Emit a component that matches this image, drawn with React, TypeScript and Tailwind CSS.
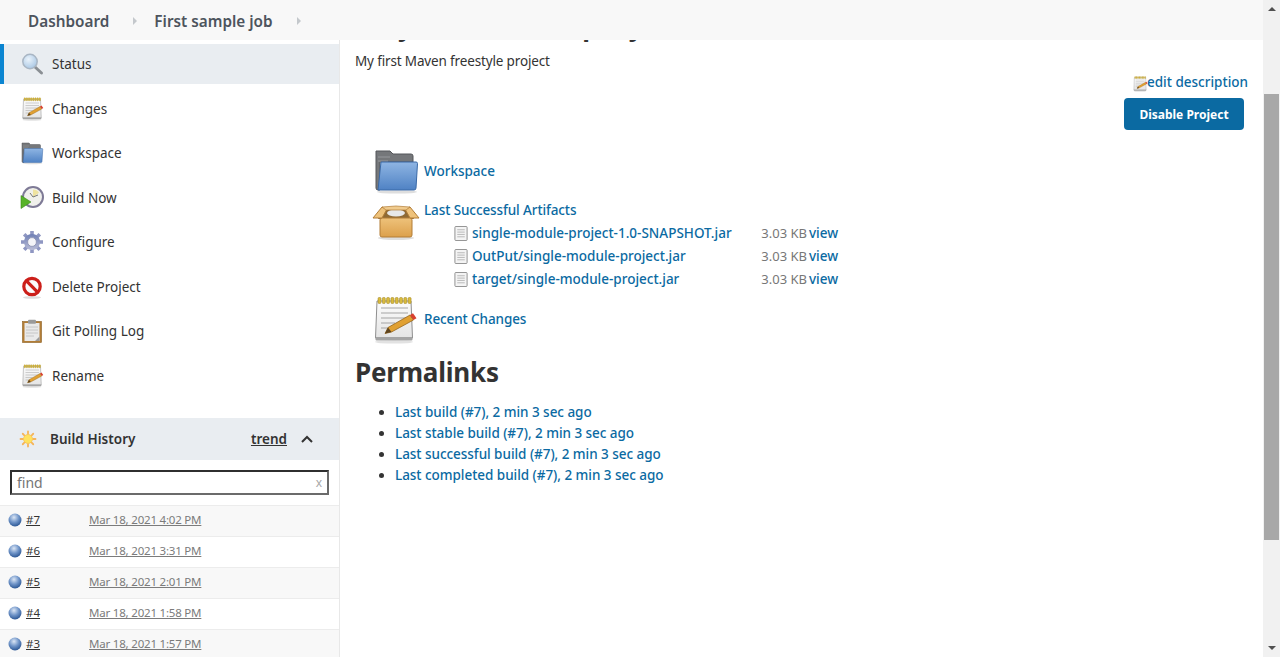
import type { ReactNode } from "react";

const font = "font-['Noto_Sans','Open_Sans',sans-serif]";

function Magnifier() {
  return (
    <svg viewBox="0 0 24 24" className="h-6 w-6 shrink-0">
      <defs>
        <radialGradient id="lens" cx="0.4" cy="0.35" r="0.8">
          <stop offset="0" stopColor="#eaf3fb" />
          <stop offset="1" stopColor="#9dbfe0" />
        </radialGradient>
      </defs>
      <path d="M15 15l6.5 6" stroke="#8a8f94" strokeWidth="3" strokeLinecap="round" />
      <circle cx="10" cy="9.5" r="7.2" fill="url(#lens)" stroke="#a9b6c4" strokeWidth="1.5" />
    </svg>
  );
}

// Notepad with pencil, also used at 48px and for the small edit icon
function Notepad({ size = "h-6 w-6" }: { size?: string }) {
  return (
    <svg viewBox="0 0 48 48" className={`${size} shrink-0`}>
      <defs>
        <linearGradient id="pad" x1="0" y1="0" x2="0" y2="1">
          <stop offset="0" stopColor="#fcfcfc" />
          <stop offset="1" stopColor="#e4e4e4" />
        </linearGradient>
      </defs>
      <ellipse cx="24" cy="46" rx="19" ry="1.6" fill="#e2e2e2" />
      <path d="M7 5h34l1.5 37h-37z" fill="url(#pad)" stroke="#8f8f8f" />
      <rect x="5.5" y="41" width="37" height="3.5" rx="1" fill="#a4a4a4" />
      <g fill="#d9bb3d" stroke="#9a7f1c" strokeWidth="0.5">
        <rect x="8" y="1.5" width="3" height="6" rx="1" />
        <rect x="12.3" y="1.5" width="3" height="6" rx="1" />
        <rect x="16.6" y="1.5" width="3" height="6" rx="1" />
        <rect x="20.9" y="1.5" width="3" height="6" rx="1" />
        <rect x="25.2" y="1.5" width="3" height="6" rx="1" />
        <rect x="29.5" y="1.5" width="3" height="6" rx="1" />
        <rect x="33.8" y="1.5" width="3" height="6" rx="1" />
        <rect x="38.1" y="1.5" width="3" height="6" rx="1" />
      </g>
      <path d="M11 12h27M11 17h27M11 22h27M11 27h14M11 32h8" stroke="#9b9b9b" strokeWidth="0.9" />
      <path d="M15 37.5l3-6 22-12.5 3.5 5-22 12z" fill="#e0a032" stroke="#8a5a12" strokeWidth="0.7" />
      <path d="M15 37.5l3-6 3.5 4.5z" fill="#5c4320" />
      <path d="M40 19l3-1.8 3.5 5-3 1.8z" fill="#d8402f" />
    </svg>
  );
}

function Folder({ size = "h-6 w-6" }: { size?: string }) {
  return (
    <svg viewBox="0 0 48 48" className={`${size} shrink-0`}>
      <defs>
        <linearGradient id="folderFront" x1="0" y1="0" x2="0" y2="1">
          <stop offset="0" stopColor="#8fb5e3" />
          <stop offset="1" stopColor="#4f82c4" />
        </linearGradient>
      </defs>
      <ellipse cx="25" cy="45" rx="20" ry="1.6" fill="#dedede" />
      <path d="M4 4h14l3 3h18a2 2 0 0 1 2 2v6H8v28H6a2 2 0 0 1-2-2z" fill="#75777a" stroke="#55575a" />
      <path d="M6 10h12M6 14h10" stroke="#97999c" />
      <path d="M6 43l3-28h35a1.5 1.5 0 0 1 1.5 1.5l-1.5 24.500a2 2 0 0 1-2 2z" fill="url(#folderFront)" stroke="#3a69a6" />
    </svg>
  );
}

function ClockPlay() {
  return (
    <svg viewBox="0 0 24 24" className="h-6 w-6 shrink-0">
      <circle cx="13" cy="11" r="10" fill="#f0f0ec" stroke="#7e7a96" strokeWidth="2" />
      <path d="M13 11V3.5a7.5 7.5 0 0 1 6 3.2z" fill="#efe3a0" />
      <path d="M13 11l-3-4M13 11l5-2" stroke="#777" strokeWidth="1" />
      <path d="M1 9.5l10 6.5-10 6.5z" fill="#58b32a" stroke="#3d8a1a" strokeWidth="0.6" />
    </svg>
  );
}

function Gear() {
  return (
    <svg viewBox="0 0 24 24" className="h-6 w-6 shrink-0">
      <defs>
        <linearGradient id="gearFill" x1="0" y1="0" x2="0" y2="1">
          <stop offset="0" stopColor="#6f7fb5" />
          <stop offset="1" stopColor="#b9bcd6" />
        </linearGradient>
      </defs>
      <g stroke="#8f97c2" strokeWidth="3.6">
        <path d="M12 1v22M1 12h22M4.2 4.2l15.6 15.6M19.8 4.2L4.2 19.8" />
      </g>
      <circle cx="12" cy="12" r="8" fill="url(#gearFill)" />
      <circle cx="12" cy="12" r="4.4" fill="#f4f4f8" stroke="#8a8fb0" strokeWidth="0.8" />
    </svg>
  );
}

function NoEntry() {
  return (
    <svg viewBox="0 0 24 24" className="h-6 w-6 shrink-0">
      <ellipse cx="12" cy="22.5" rx="9" ry="1.3" fill="#ddd" />
      <circle cx="12" cy="11.5" r="8.2" fill="#fbfbfb" stroke="#cc1f1a" strokeWidth="3.2" />
      <path d="M6.2 5.7l11.6 11.6" stroke="#cc1f1a" strokeWidth="3.2" />
    </svg>
  );
}

function Clipboard() {
  return (
    <svg viewBox="0 0 24 24" className="h-6 w-6 shrink-0">
      <rect x="2.5" y="2.5" width="19" height="21" fill="#b27d36" stroke="#8d6024" strokeWidth="0.6" />
      <rect x="4.5" y="4" width="15" height="18" fill="#e9e9e9" />
      <rect x="8" y="0.8" width="8" height="4" rx="1" fill="#9a9a9a" />
      <path d="M6 8h12M6 11h12M6 14h12M6 17h8" stroke="#bdbdbd" strokeWidth="0.8" />
      <path d="M15 22l4.5-4.5V22z" fill="#9b9b9b" />
    </svg>
  );
}

function Sun() {
  return (
    <svg viewBox="0 0 24 24" className="h-[18px] w-[18px] shrink-0">
      <g stroke="#f5b45a" strokeWidth="2.4" strokeLinecap="round">
        <path d="M12 2v3M12 19v3M2 12h3M19 12h3M5 5l2.1 2.1M16.9 16.9l2.1 2.1M5 19l2.1-2.1M16.9 7.1l2.1-2.1" />
      </g>
      <circle cx="12" cy="12" r="6" fill="#ffe25f" stroke="#f6b73c" strokeWidth="0.8" />
    </svg>
  );
}

function Ball() {
  return (
    <svg viewBox="0 0 16 16" className="h-[14px] w-[14px] shrink-0">
      <defs>
        <radialGradient id="ball" cx="0.42" cy="0.3" r="0.75">
          <stop offset="0" stopColor="#dbe6f5" />
          <stop offset="0.5" stopColor="#6f94c8" />
          <stop offset="1" stopColor="#234f8e" />
        </radialGradient>
      </defs>
      <circle cx="8" cy="8" r="7.4" fill="url(#ball)" />
    </svg>
  );
}

function Box() {
  return (
    <svg viewBox="0 0 48 48" className="mt-[7px] h-12 w-12 shrink-0">
      <defs>
        <linearGradient id="boxFill" x1="0" y1="0" x2="0" y2="1">
          <stop offset="0" stopColor="#eec27b" />
          <stop offset="1" stopColor="#dca04b" />
        </linearGradient>
      </defs>
      <ellipse cx="24" cy="33" rx="18" ry="2" fill="#dedede" />
      <path d="M10 3h28l4 11H6z" fill="#8f6a35" />
      <ellipse cx="24" cy="8" rx="9" ry="3.5" fill="#e8e8e8" />
      <rect x="8" y="13" width="32" height="19" rx="2" fill="url(#boxFill)" stroke="#b27d36" />
      <path d="M10 2L1 13h9l5-9zM38 2l9 11h-9l-5-9z" fill="#eec27b" stroke="#b27d36" />
      <path d="M10 2l14-1 14 1-4 3H14z" fill="#f0cb8e" stroke="#b27d36" strokeWidth="0.7" />
    </svg>
  );
}

function Doc() {
  return (
    <svg viewBox="0 0 14 16" className="h-[15px] w-[14px] shrink-0">
      <rect x="0.5" y="0.5" width="13" height="15" rx="1" fill="#f4f4f4" stroke="#8c8c8c" />
      <path d="M3 4h8M3 6.5h8M3 9h8M3 11.5h8" stroke="#b5b5b5" />
    </svg>
  );
}

const tasks: { label: string; icon: ReactNode }[] = [
  { label: "Status", icon: <Magnifier /> },
  { label: "Changes", icon: <Notepad /> },
  { label: "Workspace", icon: <Folder /> },
  { label: "Build Now", icon: <ClockPlay /> },
  { label: "Configure", icon: <Gear /> },
  { label: "Delete Project", icon: <NoEntry /> },
  { label: "Git Polling Log", icon: <Clipboard /> },
  { label: "Rename", icon: <Notepad /> },
];

const builds = [
  ["#7", "Mar 18, 2021 4:02 PM"],
  ["#6", "Mar 18, 2021 3:31 PM"],
  ["#5", "Mar 18, 2021 2:01 PM"],
  ["#4", "Mar 18, 2021 1:58 PM"],
  ["#3", "Mar 18, 2021 1:57 PM"],
];

const artifacts = [
  "single-module-project-1.0-SNAPSHOT.jar",
  "OutPut/single-module-project.jar",
  "target/single-module-project.jar",
];

const permalinks = [
  "Last build (#7), 2 min 3 sec ago",
  "Last stable build (#7), 2 min 3 sec ago",
  "Last successful build (#7), 2 min 3 sec ago",
  "Last completed build (#7), 2 min 3 sec ago",
];

function Crumb({ label }: { label: string }) {
  return (
    <div className="flex items-center">
      <span className="text-[15.3px] font-semibold text-[#4d545d]">{label}</span>
      <span className="ml-[24px] h-0 w-0 border-y-[4px] border-l-[4px] border-y-transparent border-l-[#c4c8cc]" />
    </div>
  );
}

function Sidebar() {
  return (
    <aside className="flex w-[340px] shrink-0 flex-col overflow-hidden border-r border-[#e8e8e8]">
      <nav className="flex flex-col pt-1">
        {tasks.map((t, i) => (
          <div
            key={t.label}
            className={`mb-[4.5px] flex h-10 items-center gap-2 border-l-4 pl-4 text-[13.5px] text-[#333] ${
              i === 0 ? "border-[#0b85d1] bg-[#e9edf1]" : "border-transparent"
            }`}
          >
            {t.icon}
            <span className="pt-[0.5px]">{t.label}</span>
          </div>
        ))}
      </nav>
      <div className="mt-[18px] flex h-[42px] shrink-0 items-center bg-[#e9edf1] pl-[19px] pr-[26px] text-[13.5px] text-[#333]">
        <Sun />
        <span className="ml-[13px] font-semibold tracking-[0.05px]">Build History</span>
        <a className="ml-auto font-semibold underline">trend</a>
        <svg viewBox="0 0 12 8" className="ml-[14px] h-2 w-3" fill="none" stroke="#333" strokeWidth="2">
          <path d="M1 7l5-5 5 5" />
        </svg>
      </div>
      <div className="shrink-0 p-[10px]">
        <div className="flex h-[25px] items-center border-2 border-[#2f2f2f] border-b-[#6b6b6b] border-r-[#6b6b6b] px-[5px] text-sm text-[#757575]">
          <span>find</span>
          <span className="ml-auto text-xs text-[#a8a8a8]">x</span>
        </div>
      </div>
      <div className="flex flex-col border-t border-[#ececec]">
        {builds.map(([num, date], i) => (
          <div
            key={num}
            className={`flex h-[31px] shrink-0 items-center border-b border-[#ececec] pb-[2px] pl-2 text-[11.5px] ${
              i % 2 === 0 ? "bg-[#f8f8f8]" : "bg-white"
            }`}
          >
            <Ball />
            <a className="ml-1 w-[63px] text-[#333] underline">{num}</a>
            <a className="tracking-[-0.2px] text-[#7b7b7b] underline">{date}</a>
          </div>
        ))}
      </div>
    </aside>
  );
}

function Main() {
  return (
    <main className="flex min-w-0 flex-1 flex-col overflow-hidden">
      {/* page is scrolled: only the descenders of the title show under the breadcrumb */}
      <h1 className="-mt-[32px] whitespace-nowrap pl-[15px] text-[26px] font-bold leading-[36px] tracking-[0.6px] text-[#333]">
        Project First sample job
      </h1>
      <p className="mt-[7px] pl-[15px] text-[13.5px] leading-5 tracking-[-0.15px] text-[#333]">My first Maven freestyle project</p>
      <div className="mt-[1px] flex flex-col items-end pr-[15px]">
        <a className="flex items-center text-[13.5px] font-medium leading-5 text-[#0b6aa2]">
          <Notepad size="h-4 w-4 mt-[4px]" />
          <span className="-ml-[1px]">edit description</span>
        </a>
        <button className="mr-1 mt-[6px] h-8 w-[120px] rounded bg-[#0b6aa2] pt-[1px] text-xs font-bold text-white">Disable Project</button>
      </div>

      <div className="mt-[17px] flex h-12 items-center pl-8 text-[13.5px] font-medium text-[#0b6aa2]">
        <Folder size="h-12 w-12" />
        <a className="ml-1">Workspace</a>
      </div>
      <div className="mt-[3px] flex pl-8 text-[13.5px] text-[#0b6aa2]">
        <Box />
        <div className="ml-1 flex flex-col">
          <a className="flex h-6 items-center font-medium tracking-[-0.1px]">Last Successful Artifacts</a>
          {artifacts.map((name) => (
            <div key={name} className="flex h-[23px] items-center pl-[30px]">
              <Doc />
              <a className="ml-1 w-[289px] whitespace-nowrap font-medium">{name}</a>
              <span className="w-[46px] whitespace-nowrap text-right text-[13px] text-[#777]">3.03 KB</span>
              <a className="ml-[2px] font-medium">view</a>
            </div>
          ))}
        </div>
      </div>
      <div className="mt-[5px] flex h-12 items-center pl-8 text-[13.5px] font-medium tracking-[-0.1px] text-[#0b6aa2]">
        <Notepad size="h-12 w-12 -ml-[2px]" />
        <a className="ml-[6px] pb-[2px]">Recent Changes</a>
      </div>

      <h2 className="mt-[8px] pl-[15px] text-[26px] font-bold leading-10 tracking-[-0.2px] text-[#333]">Permalinks</h2>
      <ul className="mt-[10px] flex list-disc flex-col pl-[55px] text-[13.5px] font-medium tracking-[-0.04px] text-[#0b6aa2] marker:text-[#333]">
        {permalinks.map((p) => (
          <li key={p} className="h-[21px] leading-[21px]">
            <a>{p}</a>
          </li>
        ))}
      </ul>
    </main>
  );
}

function Scrollbar() {
  return (
    <div className="flex h-full w-[17px] shrink-0 flex-col items-center bg-[#f1f1f1]">
      <div className="mt-[7px] h-0 w-0 border-x-[4px] border-b-[4px] border-x-transparent border-b-[#505050]" />
      <div className="mt-[83px] h-[446px] w-[15px] bg-[#a8a8a8]" />
      <div className="mb-[7px] mt-auto h-0 w-0 border-x-[4px] border-t-[4px] border-x-transparent border-t-[#505050]" />
    </div>
  );
}

export default function App() {
  return (
    <div className={`flex h-[657px] w-[1280px] overflow-hidden bg-white ${font}`}>
      <div className="flex min-w-0 flex-1 flex-col">
        <header className="flex h-10 shrink-0 items-center gap-[17px] bg-[#f8f8f8] pl-7 pt-[2px]">
          <Crumb label="Dashboard" />
          <Crumb label="First sample job" />
        </header>
        <div className="flex min-h-0 flex-1">
          <Sidebar />
          <Main />
        </div>
      </div>
      <Scrollbar />
    </div>
  );
}
